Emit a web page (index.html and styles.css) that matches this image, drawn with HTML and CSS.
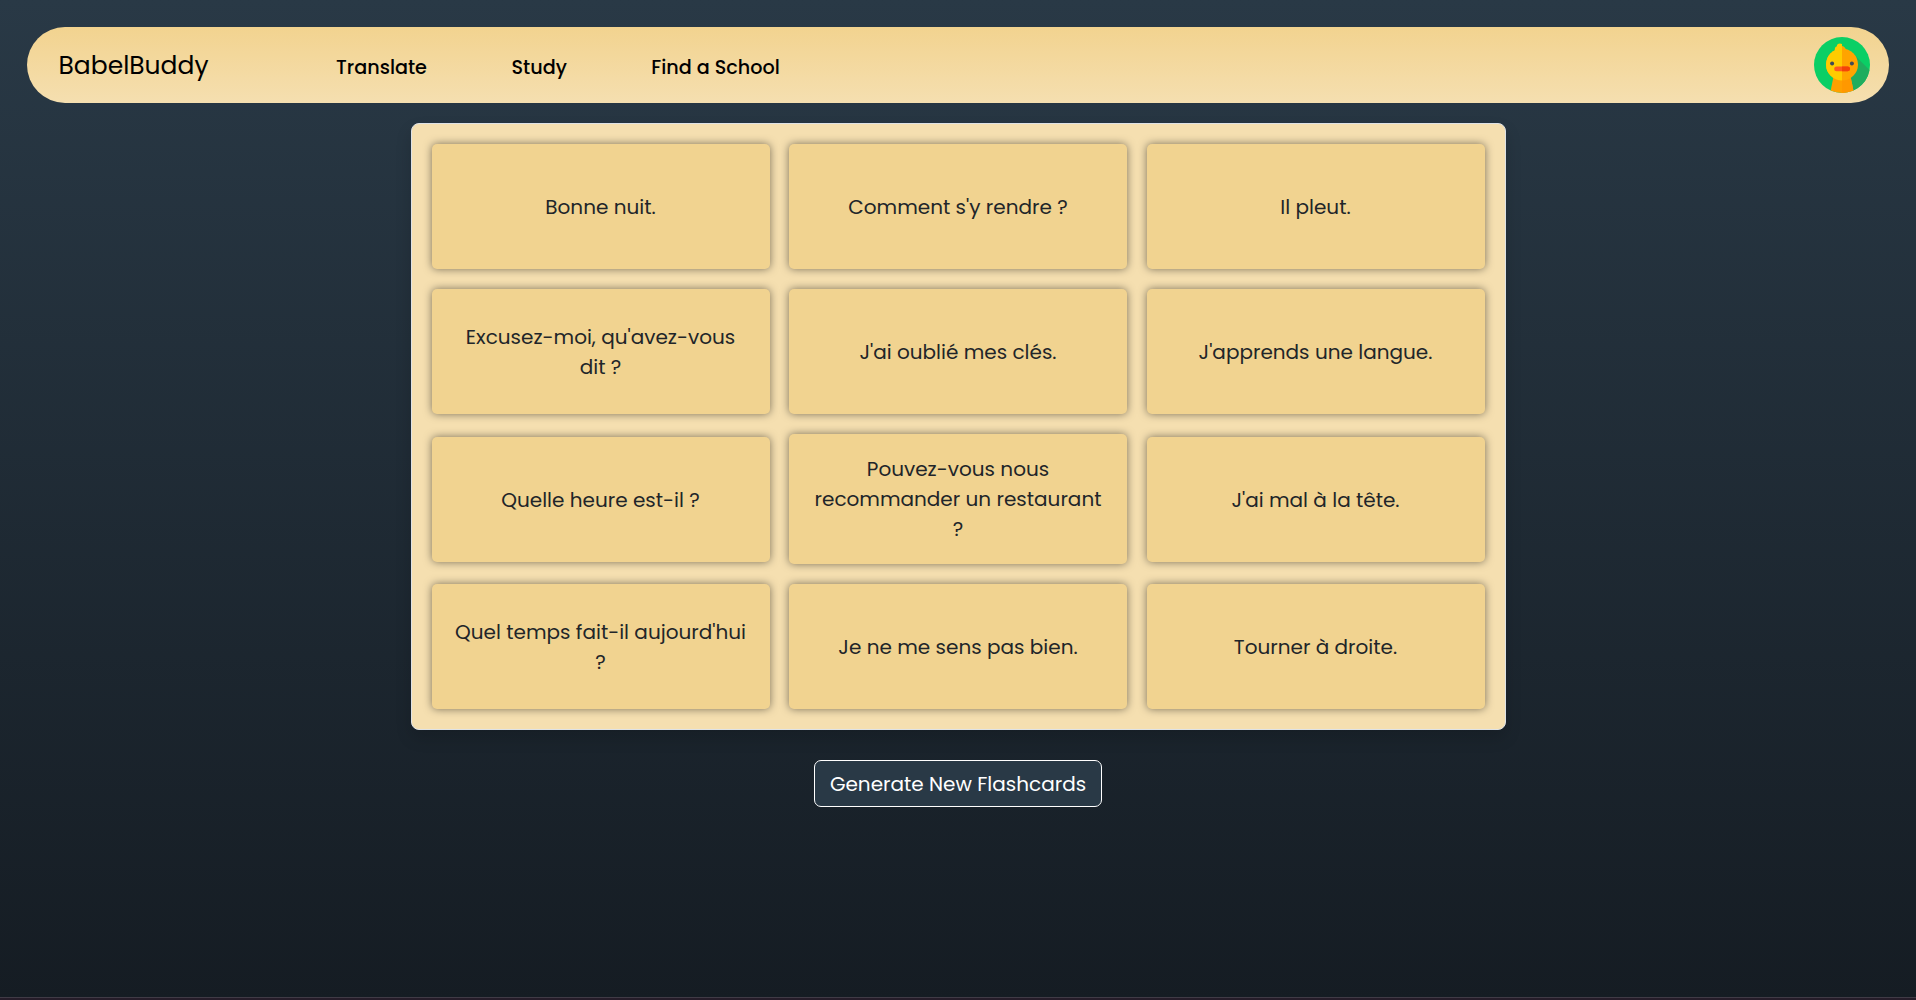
FILE: index.html
```html
<!DOCTYPE html>
<html lang="en">
<head>
<meta charset="utf-8">
<title>BabelBuddy</title>
<link rel="stylesheet" href="styles.css">
</head>
<body>
<header class="navbar">
  <a class="brand">BabelBuddy</a>
  <nav class="links">
    <a class="link">Translate</a>
    <a class="link">Study</a>
    <a class="link">Find a School</a>
  </nav>
  <svg class="avatar" viewBox="0 0 56 56" role="img" aria-label="Profile">
    <defs>
      <clipPath id="disc"><circle cx="28" cy="28" r="28"/></clipPath>
      <clipPath id="left"><rect width="28" height="56"/></clipPath>
    </defs>
    <g clip-path="url(#disc)">
      <rect width="56" height="56" fill="#0acf65"/>
      <path d="M40 17.5L58 35.5V56H37L35 38Z" fill="#1fad5e"/>
      <path d="M19.8 38H36.2L40 56H16.2Z" fill="#ffa000"/>
      <path d="M28 38H36.2L40 56H28Z" fill="#ff9800"/>
      <g fill="#ffa400">
        <circle cx="28" cy="27.5" r="16"/>
        <path d="M28 9C30.6 9.4 31.8 11.6 32.2 14H28Z"/>
      </g>
      <g clip-path="url(#left)" fill="#ffcc00">
        <circle cx="28" cy="27.5" r="16"/>
        <circle cx="26" cy="9.8" r="3.2"/>
        <circle cx="23.8" cy="12.2" r="3"/>
        <rect x="24" y="9" width="5" height="6"/>
      </g>
      <rect x="20.2" y="29.5" width="15.8" height="4.7" rx="2.3" fill="#ff5a1f"/>
      <path d="M28 29.5H33.7A2.35 2.35 0 0 1 33.7 34.2H28Z" fill="#f44408"/>
      <circle cx="18.1" cy="26.4" r="2" fill="#3e4a59"/>
      <circle cx="37.9" cy="26.4" r="2" fill="#3e4a59"/>
    </g>
  </svg>
</header>

<main class="study">
  <section class="deck">
    <article class="card">Bonne nuit.</article>
    <article class="card">Comment s'y rendre ?</article>
    <article class="card">Il pleut.</article>
    <article class="card">Excusez-moi, qu'avez-vous dit ?</article>
    <article class="card">J'ai oublié mes clés.</article>
    <article class="card">J'apprends une langue.</article>
    <article class="card">Quelle heure est-il ?</article>
    <article class="card card-tall">Pouvez-vous nous recommander un restaurant ?</article>
    <article class="card">J'ai mal à la tête.</article>
    <article class="card">Quel temps fait-il aujourd'hui ?</article>
    <article class="card">Je ne me sens pas bien.</article>
    <article class="card">Tourner à droite.</article>
  </section>
  <button class="generate" type="button">Generate New Flashcards</button>
</main>

<footer class="edge"></footer>
</body>
</html>
```
FILE: styles.css
```css
* {
  box-sizing: border-box;
}

body {
  display: flex;
  flex-direction: column;
  height: 1000px;
  margin: 0;
  overflow: hidden;
  background: linear-gradient(#293946, #151c23);
  color: #212529;
  font-family: Poppins, Inter, "Open Sans", sans-serif;
  font-size: 20px;
  line-height: 30px;
}

.navbar {
  display: flex;
  align-items: center;
  height: 76px;
  margin: 27px 27px 20.3px;
  padding: 0 19px 0 31.5px;
  border-radius: 38px;
  background: linear-gradient(#f2d38f, #f5dfb0);
  color: #000;
}

.brand {
  width: 277.5px;
  padding-top: 2px;
  font-size: 25px;
}

.links {
  display: flex;
  flex: 1;
  gap: 84.5px;
  padding-top: 6px;
  font-size: 19.2px;
  font-weight: 500;
}

.avatar {
  width: 56px;
  height: 56px;
}

.study {
  display: flex;
  flex: 1;
  flex-direction: column;
  align-items: center;
}

.deck {
  display: grid;
  grid-template-columns: repeat(3, 1fr);
  gap: 20px 19.5px;
  align-items: center;
  width: 1095px;
  padding: 20px;
  border: 1px solid #dee2e6;
  border-radius: 8px;
  background: #f5dfb0;
  box-shadow: 0 8px 16px rgba(0, 0, 0, 0.15);
}

.card {
  align-content: center;
  min-height: 125px;
  padding: 20.3px 20px 19.7px;
  border-radius: 5px;
  background: #f1d390;
  box-shadow: 0 0 8px rgba(0, 0, 0, 0.5);
  text-align: center;
}

.card-tall {
  padding: 20px;
}

.generate {
  width: 288px;
  height: 47px;
  margin-top: 29.7px;
  padding: 1px 0 0;
  border: 1px solid #fff;
  border-radius: 7px;
  background: #293946;
  color: #fff;
  font-family: inherit;
  font-size: 20px;
  line-height: 30px;
}

.edge {
  height: 3px;
  border-top: 1px solid #403b46;
  background: #251c29;
}
```
